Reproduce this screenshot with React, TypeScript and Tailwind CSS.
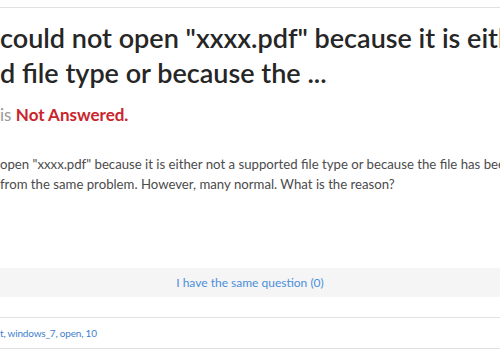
export default function App() {
    const font = { fontFamily: "Lato, 'Open Sans', sans-serif" };
    return (
        <div className="w-[500px] h-[350px] overflow-hidden bg-white" style={font}>
            <div className="h-[8px] border-b border-[#e1e1e1]" />
            <div className="pt-[12px] whitespace-nowrap">
                <h1 className="text-[27px] leading-[35px] font-semibold text-[#262626]">
                    <div>could not open "xxxx.pdf" because it is eith</div>
                    <div>d file type or because the ...</div>
                </h1>
                <div className="mt-[14px] text-[17px] leading-[22px]">
                    <span className="text-[#9a9a9a]">is </span>
                    <span className="font-bold text-[#c9252c]">Not Answered.</span>
                </div>
                <div className="mt-[28px] text-[13.2px] leading-[20px] text-[#4b4b4b]">
                    <div>open "xxxx.pdf" because it is either not a supported file type or because the file has bee</div>
                    <div>from the same problem. However, many normal. What is the reason?</div>
                </div>
            </div>
            <div className="mt-[74px] h-[29px] bg-[#f5f5f5] flex items-center justify-center">
                <button className="text-[12px] text-[#4a8fdc]">I have the same question (0)</button>
            </div>
            <div className="mt-[20px] border-t border-[#e1e1e1] h-[31px] flex items-center whitespace-nowrap">
                <span className="text-[10px] tracking-[-0.2px] text-[#3d7fd0]">t, windows_7, open, 10</span>
            </div>
            <div className="border-t border-[#e1e1e1]" />
        </div>
    );
}
